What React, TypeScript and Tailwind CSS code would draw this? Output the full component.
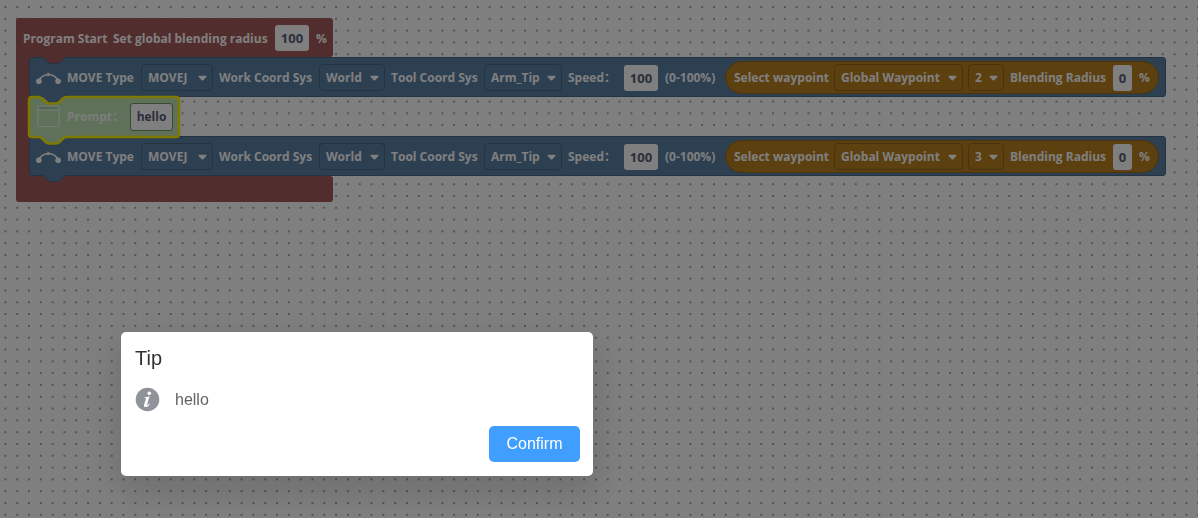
import type { ReactNode } from "react";
import { useState } from "react";

type Move = {
  id: string;
  waypoint: string;
};

const MOVES: Move[] = [
  { id: "move-1", waypoint: "2" },
  { id: "move-2", waypoint: "3" },
];

function CanvasDots() {
  return (
    <svg className="absolute inset-0 h-full w-full" aria-hidden="true">
      <defs>
        <pattern id="dots" x="-0.5" y="1.1" width="11.81" height="11.81" patternUnits="userSpaceOnUse">
          <rect x="4.9" y="4.9" width="2" height="2" fill="#a6a6a6" />
        </pattern>
      </defs>
      <rect width="100%" height="100%" fill="url(#dots)" />
    </svg>
  );
}

function Arrow() {
  return (
    <svg className="pointer-events-none absolute right-[6px] top-[11px]" width="9" height="7" viewBox="0 0 9 7" aria-hidden="true">
      <path d="M1.2 0.8h6.6c.8 0 1 .8.5 1.3L5.3 5.2c-.5.5-1.1.5-1.6 0L.7 2.1C.2 1.6.4.8 1.2.8z" fill="#fff" />
    </svg>
  );
}

function Dropdown({ label, value, className }: { label: string; value: string; className: string }) {
  return (
    <div className={`relative h-[27px] shrink-0 ${className}`}>
      <select
        aria-label={label}
        defaultValue={value}
        className="h-full w-full appearance-none rounded-[4px] border border-black/20 bg-transparent pl-[6px] pt-px font-bold outline-none"
      >
        <option>{value}</option>
      </select>
      <Arrow />
    </div>
  );
}

function Field({ id, value, className }: { id: string; value: string; className: string }) {
  return (
    <input
      id={id}
      defaultValue={value}
      className={`shrink-0 rounded-[3px] bg-white text-center font-bold text-[#575e75] outline-none ${className}`}
    />
  );
}

function Label({ htmlFor, className, children }: { htmlFor?: string; className: string; children: ReactNode }) {
  return (
    <label htmlFor={htmlFor} className={`shrink-0 whitespace-nowrap pt-px ${className}`}>
      {children}
    </label>
  );
}

function MoveIcon() {
  return (
    <svg className="w-[26px] shrink-0" height="16" viewBox="0 0 26 16" aria-hidden="true">
      <path d="M2.500 11C5 6.500 8 4.500 12.500 4.500s7.500 2 10 6.500" fill="none" stroke="#fff" strokeWidth="1.600" />
      <circle cx="2.900" cy="11.200" r="2.800" fill="#fff" />
      <circle cx="22.100" cy="11.200" r="2.800" fill="#fff" />
      <path d="M11.500 2.300L14.500 4.500L11.500 6.700z" fill="#fff" />
    </svg>
  );
}

function MoveBlock({ move }: { move: Move }) {
  return (
    <div className="relative flex h-10 w-max items-center rounded-[3px] border border-[#496684] bg-[#5b80a5] px-[6px] pt-px">
      {/* Connection notch and tab */}
      <svg className="absolute -top-px left-[10px]" width="28" height="8" viewBox="0 0 28 8" aria-hidden="true">
        <path d="M1 0C3 0 3.500 1 4.500 2L7 4.500C8 5.500 9 6.500 10.500 6.500H17.500C19 6.500 20 5.500 21 4.500L23.500 2C24.500 1 25 0 27 0Z" fill="#a55b5b" />
        <path d="M1 .5C3 .5 3.500 1 4.500 2L7 4.500C8 5.500 9 6.500 10.500 6.500H17.500C19 6.500 20 5.500 21 4.500L23.500 2C24.500 1 25 .5 27 .5" fill="none" stroke="#496684" />
      </svg>
      <svg className="absolute left-[10px] top-[37px]" width="28" height="9" viewBox="0 0 28 9" aria-hidden="true">
        <path d="M1 0V1.500C3 1.500 3.500 2 4.500 3L7 5.500C8 6.500 9 7.500 10.500 7.500H17.500C19 7.500 20 6.500 21 5.500L23.500 3C24.500 2 25 1.500 27 1.500V0Z" fill="#5b80a5" />
        <path d="M1 1.500C3 1.500 3.500 2 4.500 3L7 5.500C8 6.500 9 7.500 10.500 7.500H17.500C19 7.500 20 6.500 21 5.500L23.500 3C24.500 2 25 1.500 27 1.500" fill="none" stroke="#496684" />
      </svg>

      <MoveIcon />
      <Label className="ml-[5px] w-[74px]">MOVE Type</Label>
      <Dropdown label="MOVE Type" value="MOVEJ" className="w-[72px]" />
      <Label className="ml-[6px] w-[100px]">Work Coord Sys</Label>
      <Dropdown label="Work Coord Sys" value="World" className="w-[66px]" />
      <Label className="ml-[6px] w-[93px]">Tool Coord Sys</Label>
      <Dropdown label="Tool Coord Sys" value="Arm_Tip" className="w-[78px]" />
      <Label htmlFor={`${move.id}-speed`} className="ml-[6px] w-[56px]">Speed：</Label>
      <Field id={`${move.id}-speed`} value="100" className="h-[26px] w-[34px] text-[13px]" />
      <Label className="ml-[7px] w-[60px]">(0-100%)</Label>

      <div className="flex h-[33px] items-center rounded-full border border-[#94661a] bg-[#b98020] pl-2 pr-[7px]">
        <Label className="w-[100px]">Select waypoint</Label>
        <Dropdown label="Select waypoint" value="Global Waypoint" className="w-[129px]" />
        <Dropdown label="Waypoint number" value={move.waypoint} className="ml-[5px] w-[36px]" />
        <Label htmlFor={`${move.id}-radius`} className="ml-[6px] w-[103px]">Blending Radius</Label>
        <Field id={`${move.id}-radius`} value="0" className="h-[26px] w-[19px] text-[13px]" />
        <span className="ml-[7px] w-[12px] pt-px">%</span>
      </div>
    </div>
  );
}

function PromptBlock() {
  return (
    <div className="relative z-10 flex h-[39px] w-[151px] items-center pl-2">
      {/* Selected block outline */}
      <svg className="absolute -left-[2px] -top-[2px]" width="156" height="50" viewBox="0 0 156 50" aria-hidden="true">
        <defs>
          <linearGradient id="prompt-fill" x1="0" y1="0" x2="1" y2="1">
            <stop offset="0" stopColor="#bce4b0" />
            <stop offset="1" stopColor="#c2e2b8" />
          </linearGradient>
        </defs>
        <path
          d="M5 2H11C13 2 14 2.500 15 3.500L18 6.500C19 7.500 20 8.500 22 8.500H29C31 8.500 32 7.500 33 6.500L36 3.500C37 2.500 38 2 40 2H149Q152 2 152 5V39Q152 42 149 42H40C38 42 37 42.500 36 43.500L33 46.500C32 47.500 31 48.500 29 48.500H22C20 48.500 19 47.500 18 46.500L15 43.500C14 42.500 13 42 11 42H5Q2 42 2 39V5Q2 2 5 2Z"
          fill="url(#prompt-fill)"
          stroke="#fff200"
          strokeWidth="2.500"
        />
      </svg>
      <svg className="relative shrink-0" width="23" height="23" viewBox="0 0 23 23" aria-hidden="true">
        <rect x="1.500" y="1.500" width="20" height="3.500" fill="#a5d0a8" />
        <rect x="1" y="1" width="21" height="20.500" rx="1.500" fill="none" stroke="#eef5ec" strokeWidth="1.200" />
        <path d="M1 5H22" stroke="#eef5ec" strokeWidth="1.200" />
      </svg>
      <Label htmlFor="prompt-text" className="relative ml-[7px] w-[63px] text-[#f6faf5]">Prompt：</Label>
      <Field id="prompt-text" value="hello" className="relative h-7 w-[43px] border border-[#6e9a66]" />
    </div>
  );
}

function TipDialog({ onClose }: { onClose: () => void }) {
  return (
    <div className="fixed inset-0 z-20 flex items-end bg-black/50 pb-[42px] pl-[121px]">
      <div
        role="dialog"
        aria-modal="true"
        aria-labelledby="tip-title"
        className="flex w-[472px] flex-col rounded-[5px] bg-white pb-[14px] pl-[14px] pr-[13px] pt-[12px] font-['Liberation_Sans',Arial,sans-serif] font-normal shadow-[0_12px_32px_4px_rgba(0,0,0,0.13)]"
      >
        <h2 id="tip-title" className="text-[20px] leading-7 text-[#303133]">Tip</h2>
        <div className="mt-[15px] flex items-center gap-[15px]">
          <svg width="25" height="25" viewBox="0 0 25 25" aria-hidden="true">
            <circle cx="12.500" cy="12.500" r="11.800" fill="#909399" />
            <circle cx="14.300" cy="6.200" r="1.800" fill="#fff" />
            <path d="M9.300 10.500C11 10.200 12.600 9.700 14.500 9.300L12.200 17.500C12 18.400 12.500 18.300 14.300 16.500L14.800 17C13.300 19.300 11.900 20.100 10.500 20.100C9.200 20.100 8.700 19.200 9.100 17.800L10.900 11.800C11.100 11.200 10.700 11 9.200 11.100Z" fill="#fff" />
          </svg>
          <p className="text-base text-[#606266]">hello</p>
        </div>
        <button
          type="button"
          onClick={onClose}
          className="mt-[14px] h-9 w-[91px] self-end rounded-[5px] bg-[#409eff] text-base text-white"
        >
          Confirm
        </button>
      </div>
    </div>
  );
}

export default function App() {
  const [open, setOpen] = useState(true);

  return (
    <main className="relative min-h-screen overflow-hidden bg-white font-['Open_Sans','Noto_Sans_CJK_SC',sans-serif] text-[12px] font-bold leading-5 text-white">
      <CanvasDots />

      {/* Program block */}
      <section className="relative ml-4 mt-[18px] w-max">
        <div className="flex h-[39px] w-[317px] items-center rounded-t-[3px] rounded-br-[3px] bg-[#a55b5b] pl-[7px] pt-px">
          <span className="w-[90px] whitespace-nowrap pt-px">Program Start</span>
          <Label htmlFor="global-radius" className="w-[162px]">Set global blending radius</Label>
          <Field id="global-radius" value="100" className="h-[26px] w-[34px] text-[13px]" />
          <span className="ml-[7px] pt-px">%</span>
        </div>
        <div className="flex">
          <div className="w-4 bg-[#a55b5b]" />
          <div className="relative z-10 -ml-[3px]">
            <MoveBlock move={MOVES[0]} />
            <PromptBlock />
            <MoveBlock move={MOVES[1]} />
          </div>
        </div>
        <div className="h-[26px] w-[317px] rounded-b-[3px] rounded-tr-[3px] bg-[#a55b5b]" />
      </section>

      {open && <TipDialog onClose={() => setOpen(false)} />}
    </main>
  );
}
